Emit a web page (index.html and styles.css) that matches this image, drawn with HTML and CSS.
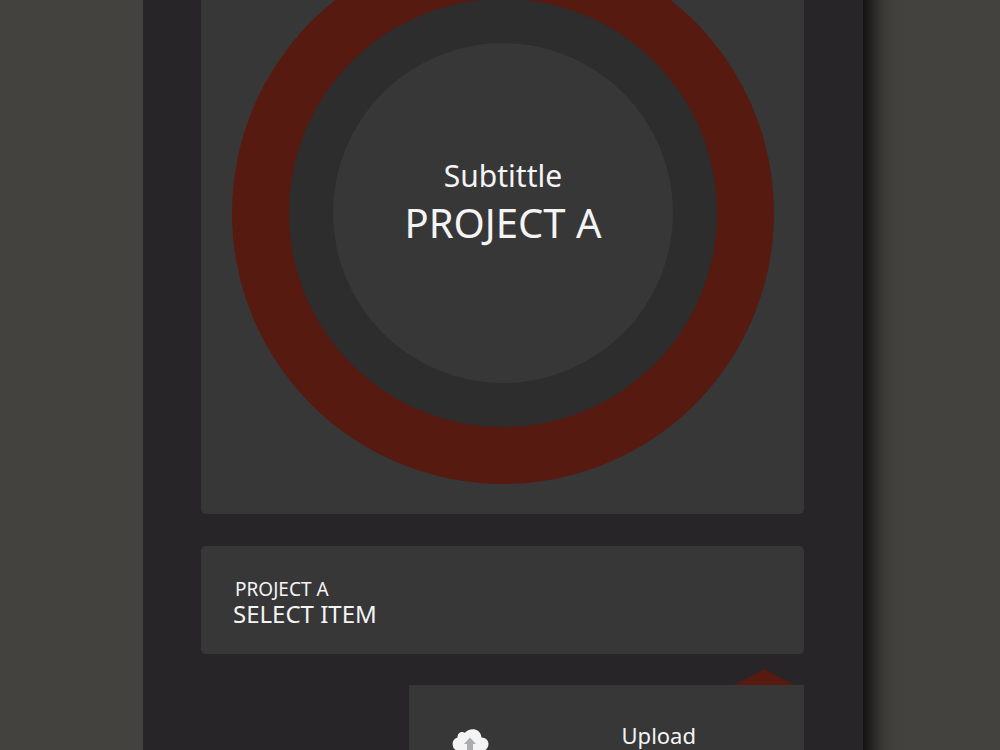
FILE: index.html
```html
<!DOCTYPE html>
<html lang="en">
<head>
<meta charset="utf-8">
<title>Project A</title>
<link rel="stylesheet" href="styles.css">
</head>
<body>
<div class="stage">
  <main class="panel">
    <section class="card dial-card">
      <div class="ring ring-outer">
        <div class="ring ring-middle">
          <div class="ring ring-inner">
            <p class="subtitle">Subtittle</p>
            <h1 class="title">PROJECT A</h1>
          </div>
        </div>
      </div>
    </section>
    <button class="card selector" type="button">
      <span class="selector-label">PROJECT A</span>
      <span class="selector-value">SELECT ITEM</span>
    </button>
    <div class="menu">
      <svg class="menu-arrow" viewBox="0 0 60 16" aria-hidden="true"><path d="M0 16 30 0 60 16Z" fill="#571a10"/></svg>
      <button class="menu-item" type="button">
        <svg class="cloud" viewBox="0 0 38 30" aria-hidden="true">
          <path d="M7 22A7 7 0 0 1 6.500 8.500C6.500 3.500 11 2 14 3.800C18 -1.500 29.500 -1.500 30.500 8.500C35 8.500 37.500 11.500 37.500 15C37.500 19 34.500 22 31 22Z" fill="#f4f4f4"/>
          <path d="M19 8.500 25 15H22V24H16V15H13Z" fill="#abadb0"/>
        </svg>
        <span class="menu-text">Upload</span>
      </button>
    </div>
  </main>
</div>
</body>
</html>
```
FILE: styles.css
```css
* { box-sizing: border-box; }
body {
  margin: 0;
  background: #43423e;
  color: #f4f4f4;
  font-family: "Noto Sans", "Open Sans", sans-serif;
}
button {
  border: 0;
  color: inherit;
  font: inherit;
  text-align: left;
  cursor: pointer;
}
.stage {
  display: grid;
  grid-template-columns: 143fr 720fr 137fr;
  height: 100vh;
  overflow: hidden;
}
.panel {
  grid-column: 2;
  display: flex;
  flex-direction: column;
  margin: -40px 0;
  padding: 40px 59px 0 58px;
  background: #282528;
  box-shadow: 10px 0 20px #0c0c0b;
  clip-path: inset(0 -60px 0 0);
}
.card {
  flex: none;
  width: 100%;
  border-radius: 5px;
  background: #373738;
}
.dial-card {
  aspect-ratio: 1;
  margin-top: -89px;
  padding: 31px 30px 29px 31px;
}
.ring {
  display: flex;
  flex-direction: column;
  align-items: center;
  justify-content: center;
  aspect-ratio: 1;
  border-radius: 50%;
}
.ring-outer { width: 100%; background: #571a10; }
.ring-middle { width: 79%; background: #2d2d2d; }
.ring-inner {
  width: 79.500%;
  padding-bottom: 24px;
  background: #373738;
}
.subtitle, .title {
  margin: 0;
  font-weight: 400;
  white-space: nowrap;
}
.subtitle { font-size: 30px; line-height: 44px; }
.title { font-size: 40px; line-height: 50px; }
.selector {
  display: flex;
  flex-direction: column;
  margin-top: 32px;
  padding: 31px 32px 27px;
}
.selector-label {
  padding-left: 2px;
  font-size: 19px;
  line-height: 24px;
}
.selector-value { font-size: 24px; line-height: 26px; }
.menu {
  position: relative;
  flex: none;
  align-self: flex-end;
  width: 395px;
  margin-top: 31px;
  background: #373738;
}
.menu-arrow {
  position: absolute;
  right: 10px;
  bottom: 100%;
  width: 60px;
  height: 16px;
}
.menu-item {
  display: flex;
  align-items: flex-start;
  justify-content: space-between;
  width: 100%;
  padding: 35px 108px 36px 42px;
  background: none;
}
.cloud {
  width: 38px;
  height: 30px;
  margin-top: 9px;
}
.menu-text { font-size: 22px; line-height: 30px; }
```
